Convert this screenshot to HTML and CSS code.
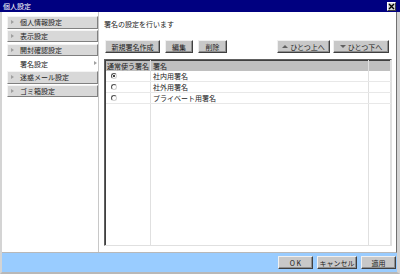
FILE: index.html
```html
<!DOCTYPE html>
<html>
<head>
    <title>個人設定</title>
    <link rel="stylesheet" href="styles.css">
</head>
<body>
    <div class="window">
        <div class="titlebar">
            <span class="title">個人設定</span>
            <span class="close">
                <svg width="7" height="7" viewBox="0 0 7 7"><path d="M1 1L6 6M6 1L1 6" stroke="#000" stroke-width="1.4"/></svg>
            </span>
        </div>
        <div class="frame">
            <div class="main">
                <!-- left menu -->
                <ul class="menu">
                    <li class="item">個人情報設定</li>
                    <li class="item">表示設定</li>
                    <li class="item">開封確認設定</li>
                    <li class="item selected">署名設定</li>
                    <li class="item">迷惑メール設定</li>
                    <li class="item">ゴミ箱設定</li>
                </ul>
                <div class="content">
                    <p class="lead">署名の設定を行います</p>
                    <div class="toolbar">
                        <div class="group">
                            <button class="btn w-new">新規署名作成</button>
                            <button class="btn w-edit">編集</button>
                            <button class="btn w-del">削除</button>
                        </div>
                        <div class="group tight">
                            <button class="btn w-up"><span class="tri up"></span>ひとつ上へ</button>
                            <button class="btn w-down"><span class="tri down"></span>ひとつ下へ</button>
                        </div>
                    </div>
                    <div class="list">
                        <table>
                            <colgroup>
                                <col class="c1">
                                <col class="c2">
                                <col>
                            </colgroup>
                            <thead>
                                <tr><th>通常使う署名</th><th class="name">署名</th><th></th></tr>
                            </thead>
                            <tbody>
                                <tr><td><span class="radio on"></span></td><td class="name">社内用署名</td><td></td></tr>
                                <tr><td><span class="radio"></span></td><td class="name">社外用署名</td><td></td></tr>
                                <tr><td><span class="radio"></span></td><td class="name">プライベート用署名</td><td></td></tr>
                                <tr class="filler"><td></td><td></td><td></td></tr>
                            </tbody>
                        </table>
                    </div>
                </div>
            </div>
            <!-- bottom buttons -->
            <div class="footer">
                <button class="btn w-ok">O K</button>
                <button class="btn w-cancel">キャンセル</button>
                <button class="btn w-apply">適用</button>
            </div>
        </div>
    </div>
</body>
</html>
```
FILE: styles.css
```css
/* window colours */
:root {
    --face: #d4d4d4;
    --button: #c8c8c8;
    --title: #000080;
    --footer: #99ccff;
    --text: #222;
}

body {
    margin: 0;
    font-family: "Noto Sans CJK JP", sans-serif;
    font-size: 7px;
    color: var(--text);
}

.window {
    width: 400px;
    height: 274px;
    display: flex;
    flex-direction: column;
    background: #fff;
}

/* title bar */
.titlebar {
    height: 12px;
    background: var(--title);
    color: #fff;
    display: flex;
    align-items: center;
    justify-content: space-between;
    padding: 0 4px 0 3px;
    box-sizing: border-box;
}

.close {
    width: 9px;
    height: 9px;
    background: var(--face);
    display: flex;
    align-items: center;
    justify-content: center;
    box-sizing: border-box;
    border: 1px solid;
    border-color: #fff #404040 #404040 #fff;
}

.frame {
    flex: 1;
    display: flex;
    flex-direction: column;
    border-left: 2px solid var(--face);
    border-right: 3px solid var(--face);
    border-bottom: 2px solid #b8b8b8;
}

.main {
    height: 240px;
    display: flex;
    border-right: 1px solid #707070;
    border-bottom: 1px solid #b8b8b8;
}

/* left menu */
.menu {
    list-style: none;
    margin: 0;
    width: 97px;
    padding: 4px 0 0 5px;
    box-sizing: border-box;
    border-right: 1px solid #c8c8c8;
    display: flex;
    flex-direction: column;
    gap: 1.3px;
}

.item {
    height: 12.5px;
    box-sizing: border-box;
    background: #d8d8d8;
    border: 1px solid;
    border-color: #f4f4f4 #808080 #808080 #f4f4f4;
    padding-left: 12px;
    display: flex;
    align-items: center;
    position: relative;
}

.item::before {
    content: "";
    position: absolute;
    left: 3px;
    top: 3px;
    border-left: 3px solid #a0a0a0;
    border-top: 2.5px solid transparent;
    border-bottom: 2.5px solid transparent;
}

.item.selected {
    background: #fff;
    border-color: #fff;
}

.item.selected::before {
    left: auto;
    right: 0;
}

.content {
    flex: 1;
    padding: 8px 4px 6px 5px;
    display: flex;
    flex-direction: column;
}

.lead {
    margin: 0;
    line-height: 9px;
}

.toolbar {
    margin: 11px 3px 0 1px;
    display: flex;
    justify-content: space-between;
}

.group {
    display: flex;
    gap: 5px;
}

.group.tight {
    gap: 3px;
}

/* raised buttons */
.btn {
    height: 13px;
    box-sizing: border-box;
    padding: 0;
    font: inherit;
    color: var(--text);
    background: var(--button);
    border: 1px solid;
    border-color: #f0f0f0 #404040 #404040 #f0f0f0;
    box-shadow: inset -1px -1px #909090;
    display: flex;
    align-items: center;
    justify-content: center;
}

.w-new { width: 55px; }
.w-edit { width: 28px; }
.w-del { width: 29px; }
.w-up { width: 53px; }
.w-down { width: 56px; }
.w-ok { width: 35px; }
.w-cancel { width: 40px; }
.w-apply { width: 35px; }

.tri {
    margin-right: 2px;
    border-left: 3px solid transparent;
    border-right: 3px solid transparent;
}

.tri.up {
    border-bottom: 3px solid #606060;
}

.tri.down {
    border-top: 3px solid #606060;
}

/* signature list */
.list {
    flex: 1;
    margin-top: 6px;
    border: 1px solid;
    border-color: #606060 #e0e0e0 #e0e0e0 #606060;
    box-shadow: inset 1px 1px #404040;
}

table {
    width: 100%;
    height: 100%;
    border-collapse: collapse;
    table-layout: fixed;
}

.c1 { width: 45px; }
.c2 { width: 218px; }

th, td {
    height: 10px;
    padding: 0 0 0 1px;
    font-weight: normal;
    text-align: left;
    line-height: 9px;
    border-right: 1px solid #e0e0e0;
    white-space: nowrap;
    overflow: hidden;
}

th {
    background: #c0c0c0;
    border-top: 1px solid #404040;
    border-left: 1px solid #404040;
}

td {
    border-bottom: 1px solid #e8e8e8;
}

th.name, td.name {
    padding-left: 2px;
}

.filler td {
    height: auto;
    border-bottom: none;
}

.radio {
    display: block;
    width: 6px;
    height: 6px;
    margin-left: 4px;
    box-sizing: border-box;
    border-radius: 50%;
    border: 1px solid;
    border-color: #505050 #d0d0d0 #d0d0d0 #505050;
    position: relative;
}

.radio.on::after {
    content: "";
    position: absolute;
    left: 1px;
    top: 1px;
    width: 2px;
    height: 2px;
    border-radius: 50%;
    background: #000;
}

/* footer */
.footer {
    flex: 1;
    background: var(--footer);
    display: flex;
    justify-content: flex-end;
    align-items: center;
    gap: 4px;
    padding-right: 1px;
}
```
